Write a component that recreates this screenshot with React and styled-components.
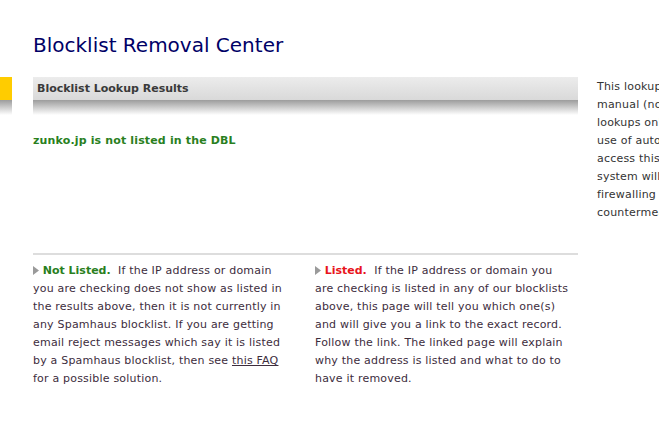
import React from 'react'
import styled, { createGlobalStyle } from 'styled-components'

const GlobalStyle = createGlobalStyle`
    html, body {
        margin: 0;
        padding: 0;
        background: #fff;
        overflow: hidden;
    }
    body {
        font-family: "DejaVu Sans", Verdana, sans-serif;
        font-size: 11px;
        color: #3d2d3d;
    }
`

function Arrow() {
    return (
        <ArrowIcon width="6" height="9" viewBox="0 0 6 9">
            <path d="M0 0 L6 4.5 L0 9 Z" fill="#9a9a9a" />
        </ArrowIcon>
    )
}

export default function App() {
    return (
        <Page>
            <GlobalStyle />

            <LeftNav>
                <NavTab />
            </LeftNav>

            <Main>
                <Title>Blocklist Removal Center</Title>

                <BarHeader>Blocklist Lookup Results</BarHeader>

                <Result>zunko.jp is not listed in the DBL</Result>

                <Divider />

                <Columns>
                    <Note>
                        <Arrow /> <Status ok>Not Listed.</Status>&nbsp; If the IP address or domain
                        you are checking does not show as listed in the results above, then it
                        is not currently in any Spamhaus blocklist. If you are getting email
                        reject messages which say it is listed by a Spamhaus blocklist, then
                        see <FaqLink href="#">this FAQ</FaqLink> for a possible solution.
                    </Note>
                    <Note last>
                        <Arrow /> <Status>Listed.</Status>&nbsp; If the IP address or domain you
                        are checking is listed in any of our blocklists above, this page will
                        tell you which one(s) and will give you a link to the exact record.
                        Follow the link. The linked page will explain why the address is listed
                        and what to do to have it removed.
                    </Note>
                </Columns>
            </Main>

            <Sidebar>
                <Line>This lookup tool is for</Line>
                <Line>manual (non-automated)</Line>
                <Line>lookups only. Any other</Line>
                <Line>use of automated tools to</Line>
                <Line>access this service is</Line>
                <Line>system will block abuse by</Line>
                <Line>firewalling and other</Line>
                <Line>countermeasures.</Line>
            </Sidebar>
        </Page>
    )
}

const Page = styled.div`
    display: flex;
    align-items: flex-start;
    width: 820px;
`

const LeftNav = styled.div`
    width: 12px;
    flex-shrink: 0;
    padding-top: 77px;
    margin-right: 21px;
`

const NavTab = styled.div`
    height: 23px;
    background: #ffcc00;
    position: relative;

    &::after {
        content: '';
        position: absolute;
        left: 0;
        right: 0;
        top: 100%;
        height: 15px;
        background: linear-gradient(#9c9c9c, #ffffff);
    }
`

const Main = styled.div`
    width: 545px;
    flex-shrink: 0;
`

const Title = styled.h1`
    margin: 0 0 20px;
    padding-top: 33px;
    font-size: 20px;
    font-weight: normal;
    line-height: 24px;
    color: #000066;
`

const BarHeader = styled.div`
    height: 23px;
    line-height: 23px;
    padding-left: 4px;
    font-size: 11px;
    font-weight: bold;
    color: #3a3a3a;
    background: linear-gradient(#ececec, #d9d9d9);
    position: relative;

    &::after {
        content: '';
        position: absolute;
        left: 0;
        right: 0;
        top: 100%;
        height: 15px;
        background: linear-gradient(#9c9c9c, #ffffff);
    }
`

const Result = styled.div`
    margin-top: 32px;
    height: 121px;
    line-height: 18px;
    font-weight: bold;
    letter-spacing: 0.15px;
    color: #2a7f1e;
`

const Divider = styled.div`
    height: 2px;
    background: #dddddd;
`

const Columns = styled.div`
    display: grid;
    grid-template-columns: 282px 263px;
    padding-top: 7px;
`

const Note = styled.p`
    margin: 0;
    padding-right: ${p => (p.last ? '9px' : '30px')};
    line-height: 18px;
    letter-spacing: 0.2px;
`

const ArrowIcon = styled.svg`
    vertical-align: -1px;
`

const Status = styled.b`
    letter-spacing: 0;
    color: ${p => (p.ok ? '#2a7f1e' : '#e8141c')};
`

const FaqLink = styled.a`
    color: inherit;
    text-decoration: underline;
`

const Sidebar = styled.div`
    margin-left: 19px;
    padding-top: 78px;
    line-height: 18px;
    letter-spacing: 0.2px;
    color: #333333;
`

const Line = styled.div`
    white-space: nowrap;
`
